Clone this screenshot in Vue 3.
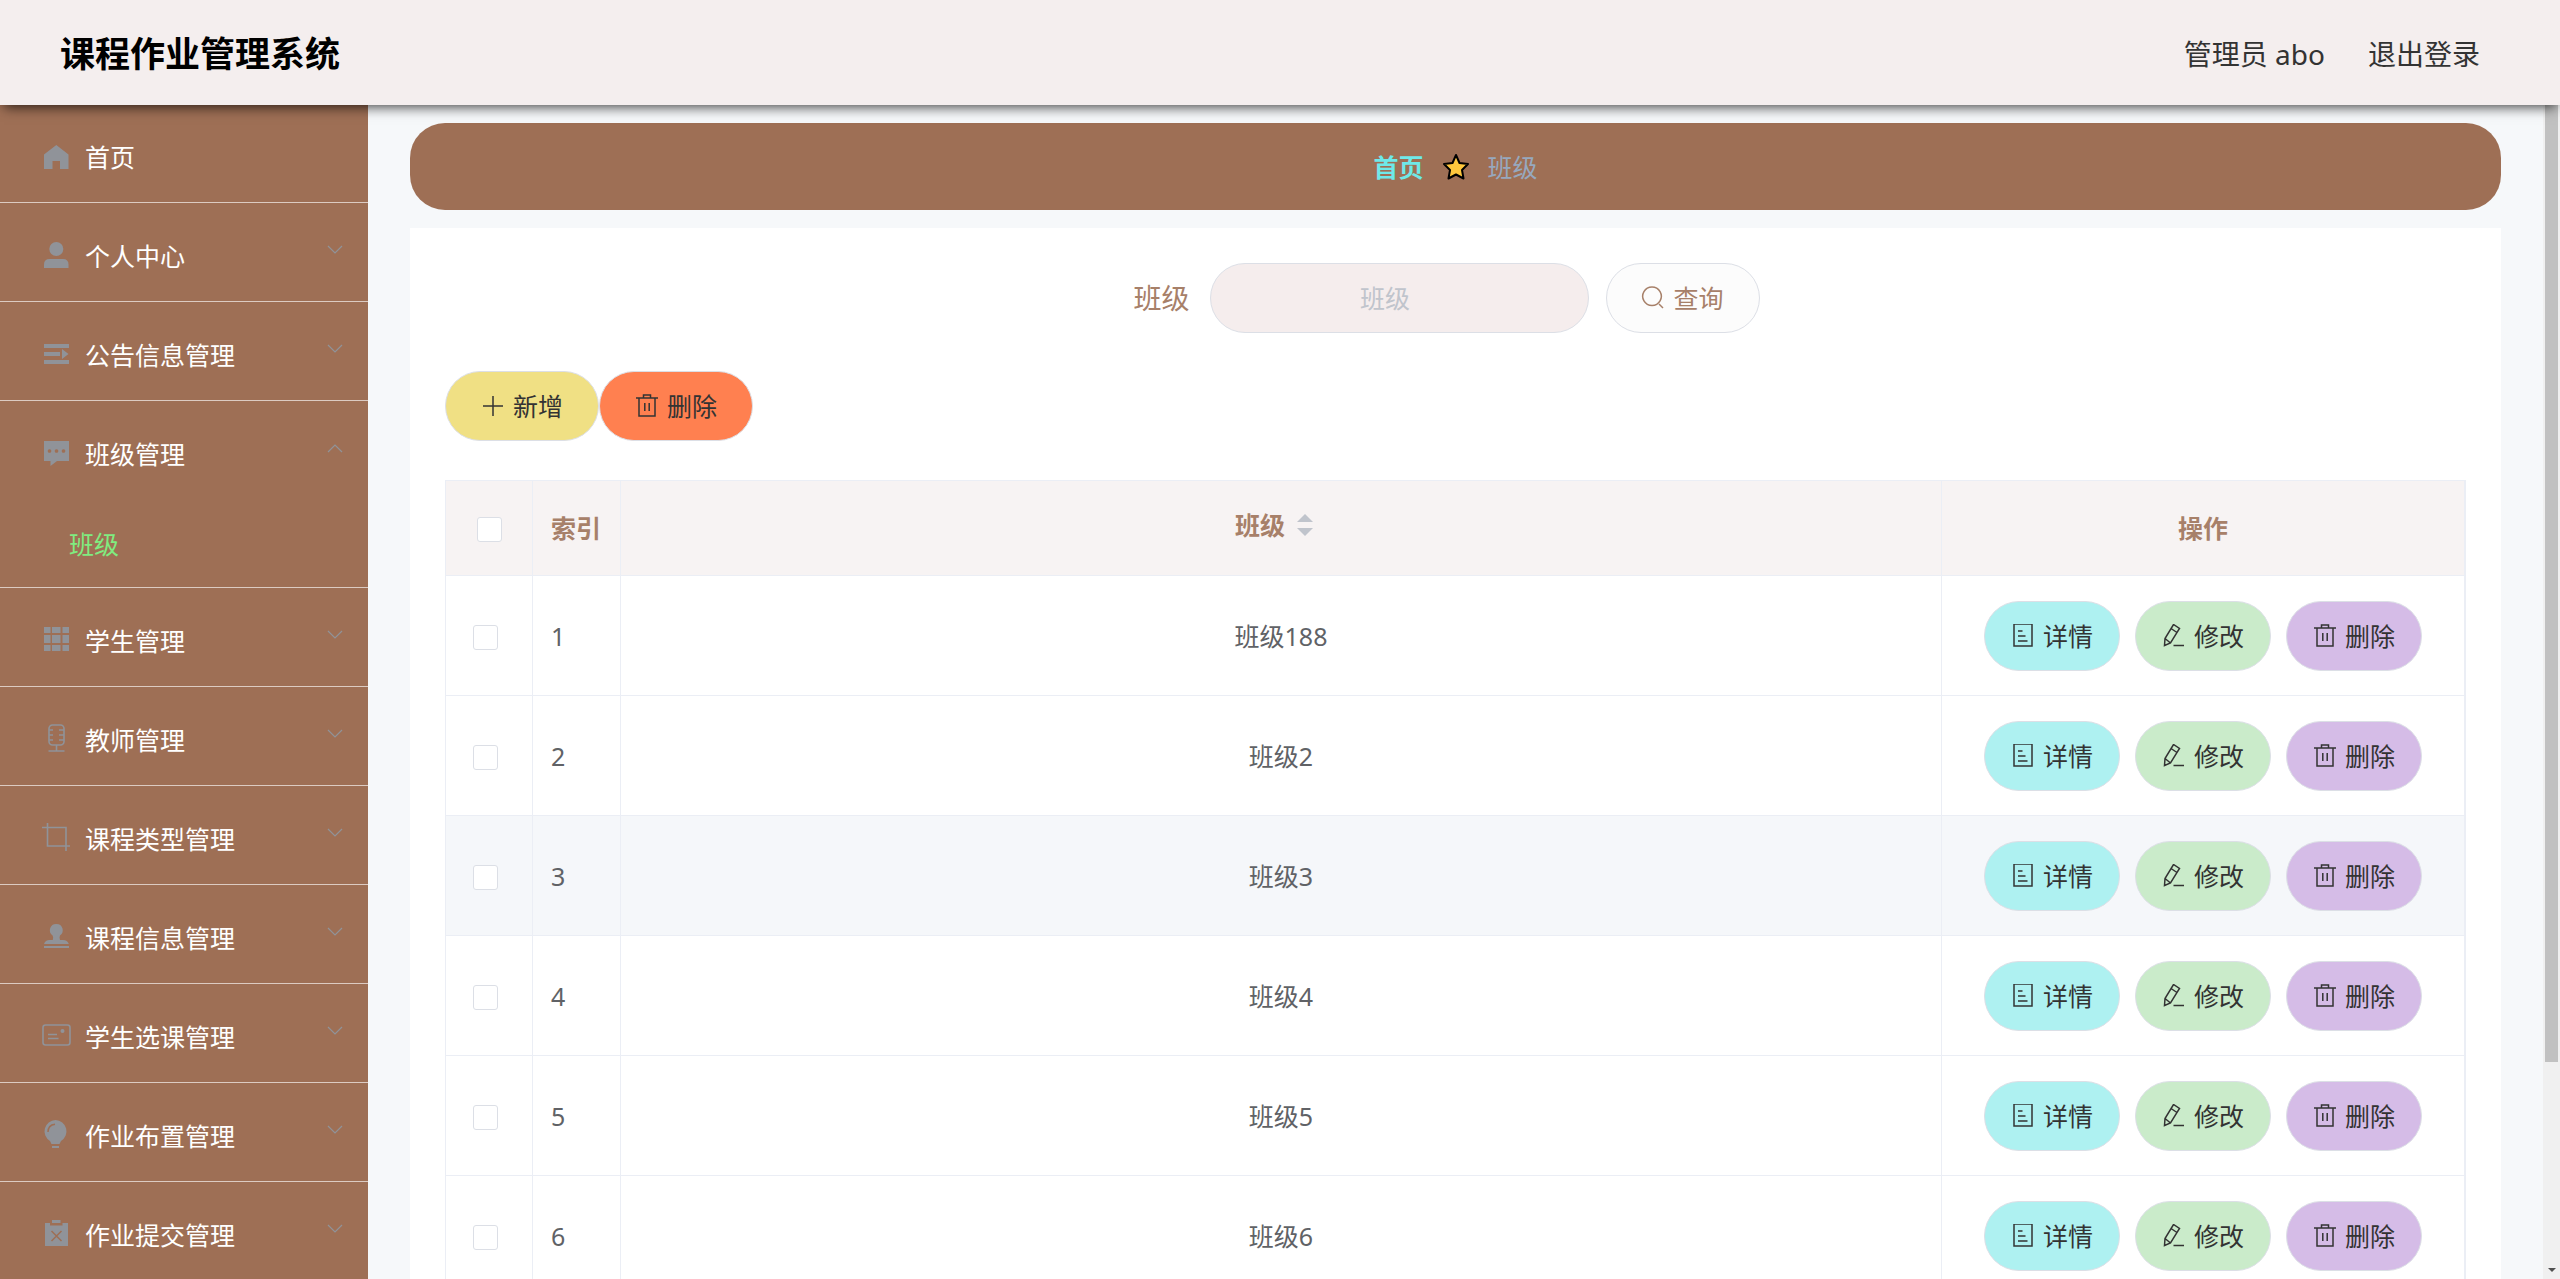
<script setup>
import { ref } from 'vue'

const icons = {
  home: '<path fill="currentColor" d="M14.300 2 26.500 11.500V26H18V18H10.500V26H2V11.500Z"/>',
  user: '<circle fill="currentColor" cx="14.300" cy="7" r="7"/><path fill="currentColor" d="M2 26V22.500Q2 17 7.500 17H21Q26.500 17 26.500 22.500V26Z"/>',
  unfold: '<path fill="currentColor" d="M2 3H27V7H2ZM2 11H18V15H2ZM2 19H27V23H2ZM20 8 26.500 13 20 18Z"/>',
  chat: '<path fill="currentColor" fill-rule="evenodd" d="M2 1H27V21H15L8.500 26V21H2ZM7.500 9.200a1.800 1.800 0 1 0 .01 0ZM14.500 9.200a1.800 1.800 0 1 0 .01 0ZM21.500 9.200a1.800 1.800 0 1 0 .01 0Z"/>',
  grid: '<path fill="currentColor" d="M2 0H8.500V6H2ZM10 0H18.500V6H10ZM20.500 0H27V6H20.500ZM2 8H8.500V16H2ZM10 8H18.500V16H10ZM20.500 8H27V16H20.500ZM2 18H8.500V24H2ZM10 18H18.500V24H10ZM20.500 18H27V24H20.500Z"/>',
  mic: '<g fill="none" stroke="currentColor" stroke-width="1.600"><rect x="7" y="-1" width="15" height="20" rx="3.500"/><path d="M7 4H11M7 9H11M7 14H11M22 4H17M22 9H17M22 14H17M14.500 19V25M6.500 25H22.500"/></g>',
  crop: '<g fill="none" stroke="currentColor" stroke-width="1.600"><path d="M5.500-2V21H28M0 2.500H24V26"/></g>',
  stamp: '<path fill="currentColor" d="M14.300 0a6.300 6.300 0 0 1 3.700 11.500Q17 13 18 16H21Q25.500 16 26.800 20H2Q3.300 16 7.500 16H10.800Q11.600 13 10.600 11.500A6.300 6.300 0 0 1 14.300 0ZM2 22H27V24H2Z"/>',
  postcard: '<g fill="none" stroke="currentColor" stroke-width="1.600"><rect x="1" y="2" width="27" height="20" rx="2.500"/><path d="M6 11.500H15M6 15.500H16.500"/></g><circle fill="currentColor" cx="20.500" cy="8" r="2"/>',
  bulb: '<path fill="currentColor" d="M13.500-2A11.300 11.300 0 0 1 19 19L17.500 22H9.500L8 19A11.300 11.300 0 0 1 13.500-2ZM10 24H17V26H10Z"/><path fill="none" stroke="#9e6f55" stroke-width="1.500" d="M6 10Q6 3 13 2.200"/>',
  failed: '<path fill="currentColor" d="M10-1H18.500V2H10ZM3 2H8V4.500H20.500V2H26V25H3Z"/><path stroke="#9e6f55" stroke-width="1.500" d="m9.500 10 10 10m0-10-10 10"/>',
  plus: '<path fill="none" stroke="currentColor" stroke-width="1.500" d="M12 2V22M2 12H22"/>',
  trash: '<path fill="none" stroke="currentColor" stroke-width="1.500" d="M1 4H23M4 4V22H20V4M8.500 4V1H15.500V4M9.800 9V17M14.200 9V17"/>',
  search: '<path fill="none" stroke="currentColor" stroke-width="1.500" d="M11 1a9.300 9.300 0 1 0 .01 0M18 18 22 22"/>',
  document: '<path fill="none" stroke="currentColor" stroke-width="1.500" d="M3 0H21V22H3ZM7 7H11.500M7 12H14.500M7 17H16.500"/>',
  edit: '<path fill="none" stroke="currentColor" stroke-width="1.500" d="M11.500 .5 17.500 4.500 8.500 19 2.500 21.500 3 14.500ZM9 4.500 15 8.500M3 14.500 8.500 19M11.500 21.500H22"/>'
}

const menus = [
  { title: '个人中心', icon: 'user' },
  { title: '公告信息管理', icon: 'unfold' },
  { title: '班级管理', icon: 'chat', children: ['班级'] },
  { title: '学生管理', icon: 'grid' },
  { title: '教师管理', icon: 'mic' },
  { title: '课程类型管理', icon: 'crop' },
  { title: '课程信息管理', icon: 'stamp' },
  { title: '学生选课管理', icon: 'postcard' },
  { title: '作业布置管理', icon: 'bulb' },
  { title: '作业提交管理', icon: 'failed' }
]

const rows = ['班级188', '班级2', '班级3', '班级4', '班级5', '班级6']
const activeRow = 2
const keyword = ref('')
</script>

<template>
  <div class="layout">
    <header class="topbar">
      <h1>课程作业管理系统</h1>
      <nav class="account">
        <span>管理员 abo</span>
        <a href="#">退出登录</a>
      </nav>
    </header>

    <div class="body">
      <aside class="sidebar">
        <ul class="menu">
          <li class="menu-group first">
            <a href="#" class="menu-title">
              <svg class="menu-icon" viewBox="0 0 28 28" v-html="icons.home"></svg>
              <span>首页</span>
            </a>
          </li>
          <li v-for="m in menus" :key="m.title" class="menu-group">
            <button type="button" class="menu-title" :aria-expanded="!!m.children">
              <svg class="menu-icon" viewBox="0 0 28 28" v-html="icons[m.icon]"></svg>
              <span>{{ m.title }}</span>
              <svg class="chevron" :class="{ open: m.children }" viewBox="0 0 16 10">
                <path d="M1 1 8 8 15 1" fill="none" stroke="currentColor" stroke-width="1.2" />
              </svg>
            </button>
            <a v-for="c in m.children" :key="c" href="#" class="menu-child">{{ c }}</a>
          </li>
        </ul>
      </aside>

      <main class="content">
        <nav class="breadcrumb">
          <a href="#">首页</a>
          <svg class="star" viewBox="0 0 28 28">
            <path d="M14 2 17.500 10 26 11 20 17 21.500 25.500 14 21.500 6.500 25.500 8 17 2 11 10.500 10Z" fill="#ffc83d" stroke="#000" stroke-width="2" stroke-linejoin="round" />
          </svg>
          <span>班级</span>
        </nav>

        <section class="card">
          <form class="search" @submit.prevent>
            <label for="class-name">班级</label>
            <input id="class-name" v-model="keyword" type="text" placeholder="班级" />
            <button type="submit" class="btn query">
              <svg class="icon" viewBox="0 0 24 24" v-html="icons.search"></svg>查询
            </button>
          </form>

          <div class="toolbar">
            <button type="button" class="btn add">
              <svg class="icon" viewBox="0 0 24 24" v-html="icons.plus"></svg>新增
            </button>
            <button type="button" class="btn remove">
              <svg class="icon" viewBox="0 0 24 24" v-html="icons.trash"></svg>删除
            </button>
          </div>

          <table>
            <colgroup>
              <col class="col-check" />
              <col class="col-index" />
              <col />
              <col class="col-ops" />
            </colgroup>
            <thead>
              <tr>
                <th class="check-head"><input type="checkbox" aria-label="全选" /></th>
                <th class="index">索引</th>
                <th>
                  <span class="sortable">班级
                    <svg class="sort" viewBox="0 0 16 24"><path d="M0 9 8 1 16 9ZM0 15H16L8 23Z" fill="#c0c4cc" /></svg>
                  </span>
                </th>
                <th>操作</th>
              </tr>
            </thead>
            <tbody>
              <tr v-for="(name, i) in rows" :key="name" :class="{ active: i === activeRow }">
                <td class="check"><input type="checkbox" :aria-label="name" /></td>
                <td class="index">{{ i + 1 }}</td>
                <td>{{ name }}</td>
                <td>
                  <div class="ops">
                    <button type="button" class="btn small detail">
                      <svg class="icon" viewBox="0 0 24 24" v-html="icons.document"></svg>详情
                    </button>
                    <button type="button" class="btn small edit">
                      <svg class="icon" viewBox="0 0 24 24" v-html="icons.edit"></svg>修改
                    </button>
                    <button type="button" class="btn small delete">
                      <svg class="icon" viewBox="0 0 24 24" v-html="icons.trash"></svg>删除
                    </button>
                  </div>
                </td>
              </tr>
            </tbody>
          </table>
        </section>
      </main>

      <div class="scrollbar" aria-hidden="true">
        <div class="thumb"></div>
        <svg class="arrow" viewBox="0 0 8 4"><path d="M0 0H8L4 4Z" fill="#505050" /></svg>
      </div>
    </div>
  </div>
</template>

<style>
body {
  margin: 0;
  overflow: hidden;
}
</style>

<style scoped>
.layout {
  display: flex;
  flex-direction: column;
  height: 100vh;
  overflow: hidden;
  background: #f6f8fa;
  color: #606266;
  font-family: "Noto Sans", "Noto Sans CJK SC", sans-serif;
  font-size: 25px;
  line-height: 36px;
}
.layout * {
  box-sizing: border-box;
}
a {
  color: inherit;
  text-decoration: none;
}
button,
input {
  margin: 0;
  font: inherit;
}

.topbar {
  position: relative;
  z-index: 1;
  display: flex;
  flex: none;
  align-items: center;
  justify-content: space-between;
  height: 105px;
  padding: 3px 80px 0 60px;
  background: #f4eeee;
  box-shadow: 0 6px 12px -4px rgba(0, 0, 0, 0.75);
}
h1 {
  margin: 0;
  color: #000;
  font-size: 35px;
  line-height: 48px;
}
.account {
  display: flex;
  gap: 43px;
  color: #333;
  font-size: 28px;
}

.body {
  display: flex;
  flex: 1;
  min-height: 0;
}
.sidebar {
  flex: none;
  width: 368px;
  overflow: hidden;
  background: #9e6f55;
}
.menu {
  margin: 0;
  padding: 0;
  list-style: none;
}
.menu-group {
  border-bottom: 1px solid #dccbc2;
}
.menu-title {
  display: flex;
  align-items: center;
  width: 100%;
  height: 98px;
  padding: 8px 24px 0 42px;
  border: 0;
  background: none;
  color: #fff;
  text-align: left;
}
.first .menu-title {
  height: 97px;
  padding-top: 6px;
}
.menu-icon {
  width: 28px;
  height: 28px;
  margin-right: 15px;
  overflow: visible;
  color: #909399;
}
.chevron {
  width: 16px;
  height: 10px;
  margin: 0 1px 12px auto;
  color: #909399;
}
.chevron.open {
  transform: rotate(180deg);
}
.menu-child {
  display: block;
  height: 88px;
  padding: 1px 0 0 69px;
  color: #80ec80;
  line-height: 88px;
}

.content {
  flex: 1;
  min-width: 0;
  padding: 18px 42px 0;
}
.breadcrumb {
  display: flex;
  align-items: center;
  justify-content: center;
  gap: 18px;
  height: 87px;
  border-radius: 35px;
  background: #9e6f55;
  color: #97a8be;
}
.breadcrumb a {
  color: #6ee9e9;
  font-weight: 700;
}
.star {
  width: 28px;
  height: 28px;
}
.card {
  margin-top: 18px;
  padding: 35px;
  background: #fff;
}
.search {
  display: flex;
  align-items: center;
  justify-content: center;
  padding-right: 18px;
}
.search label {
  margin-right: 20px;
  color: #a78069;
  font-size: 28px;
}
.search input {
  width: 379px;
  height: 70px;
  margin-right: 17px;
  padding: 0 54px 0 26px;
  border: 1px solid #dcdfe6;
  border-radius: 35px;
  outline: 0;
  background: #f5eded;
  text-align: center;
}
.search input::placeholder {
  color: #c0c4cc;
}
.btn {
  display: flex;
  align-items: center;
  justify-content: center;
  gap: 8px;
  width: 154px;
  height: 70px;
  padding: 0;
  border: 1px solid #dcdfe6;
  border-radius: 35px;
  color: #333;
}
.btn.small {
  width: 136px;
}
.icon {
  flex: none;
  width: 24px;
  height: 24px;
}
.query {
  background: #fcfcfc;
  color: #a78069;
}
.add {
  background: #f0e084;
}
.remove {
  background: #ff8050;
}
.detail {
  background: #aef1f1;
}
.edit {
  background: #caebca;
}
.delete {
  background: #d5bce7;
}
.toolbar {
  display: flex;
  margin: 38px 0 39px;
}

table {
  width: 100%;
  border: 1px solid #ebeef5;
  border-bottom: 0;
  border-spacing: 0;
  table-layout: fixed;
}
.col-check {
  width: 87px;
}
.col-index {
  width: 88px;
}
.col-ops {
  width: 523px;
}
th,
td {
  padding: 0;
  border-right: 1px solid #ebeef5;
  border-bottom: 1px solid #ebeef5;
  text-align: center;
}
th {
  height: 95px;
  background: #f7f3f3;
  color: #a78069;
}
td {
  height: 120px;
}
.index {
  padding-left: 18px;
  text-align: left;
}
.active td {
  background: #f5f7fa;
}
.check {
  padding-right: 7px;
}
input[type="checkbox"] {
  display: block;
  width: 25px;
  height: 25px;
  margin: 3px auto 0;
  border: 1px solid #dcdfe6;
  border-radius: 3px;
  appearance: none;
  background: #fff;
}
.sortable {
  display: flex;
  align-items: center;
  justify-content: center;
  gap: 12px;
  padding: 0 14px 6px 0;
}
.sort {
  width: 16px;
  height: 24px;
}
.ops {
  display: flex;
  justify-content: center;
  gap: 15px;
}

.scrollbar {
  display: flex;
  flex: none;
  flex-direction: column;
  align-items: center;
  justify-content: space-between;
  width: 17px;
  padding-bottom: 7px;
  background: #f0f0f0;
}
.thumb {
  width: 13px;
  height: 82%;
  background: #c1c1c1;
}
.arrow {
  width: 8px;
  height: 4px;
}
</style>
